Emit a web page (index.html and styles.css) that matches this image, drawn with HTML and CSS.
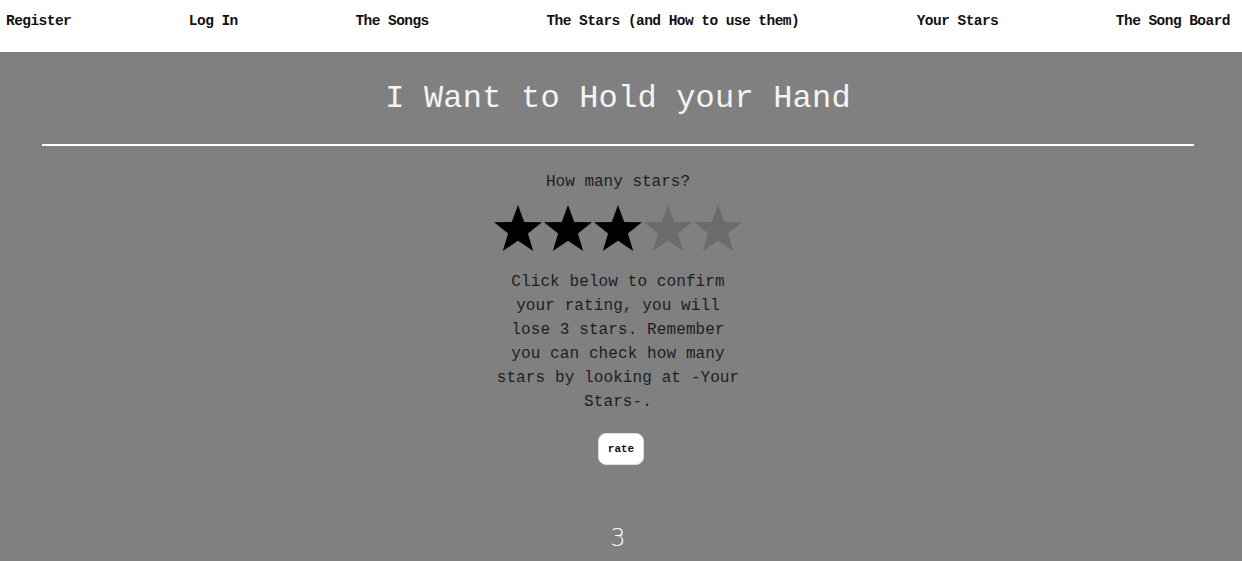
FILE: index.html
```html
<!DOCTYPE html>
<html>
<head>
<meta charset="utf-8">
<link rel="stylesheet" href="styles.css">
</head>
<body>
<nav class="nav">
  <a href="#">Register</a>
  <a href="#">Log In</a>
  <a href="#">The Songs</a>
  <a href="#">The Stars (and How to use them)</a>
  <a href="#">Your Stars</a>
  <a href="#">The Song Board</a>
</nav>
<main class="main">
  <h1 class="title">I Want to Hold your Hand</h1>
  <hr class="rule">
  <section class="rating">
    <p class="ask">How many stars?</p>
    <div class="stars">
      <svg class="star on" viewBox="0 0 50 50"><polygon points="25,1 31.2,18 49,18.3 34.9,29.5 40.2,47 25,36.7 9.8,47 15.1,29.5 1,18.3 18.8,18"/></svg>
      <svg class="star on" viewBox="0 0 50 50"><polygon points="25,1 31.2,18 49,18.3 34.9,29.5 40.2,47 25,36.7 9.8,47 15.1,29.5 1,18.3 18.8,18"/></svg>
      <svg class="star on" viewBox="0 0 50 50"><polygon points="25,1 31.2,18 49,18.3 34.9,29.5 40.2,47 25,36.7 9.8,47 15.1,29.5 1,18.3 18.8,18"/></svg>
      <svg class="star off" viewBox="0 0 50 50"><polygon points="25,1 31.2,18 49,18.3 34.9,29.5 40.2,47 25,36.7 9.8,47 15.1,29.5 1,18.3 18.8,18"/></svg>
      <svg class="star off" viewBox="0 0 50 50"><polygon points="25,1 31.2,18 49,18.3 34.9,29.5 40.2,47 25,36.7 9.8,47 15.1,29.5 1,18.3 18.8,18"/></svg>
    </div>
    <p class="note">Click below to confirm your rating, you will lose 3 stars. Remember you can check how many stars by looking at -Your Stars-.</p>
    <button class="rate">rate</button>
    <div class="count">3</div>
  </section>
</main>
</body>
</html>
```
FILE: styles.css
```css
* { box-sizing: border-box; }
html, body { margin: 0; padding: 0; }
body {
  background: #808080;
  font-family: "Liberation Mono", "DejaVu Sans Mono", monospace;
  overflow: hidden;
}
.nav {
  background: #fff;
  height: 52px;
  display: flex;
  justify-content: space-between;
  align-items: flex-start;
  padding: 11px 12px 0 6px;
}
.nav a {
  color: #111;
  text-decoration: none;
  font-family: "Liberation Mono", monospace;
  font-weight: bold;
  font-size: 14.5px;
  letter-spacing: -0.55px;
  line-height: 20px;
}
.main {
  margin: 0 48px 0 42px;
  display: flex;
  flex-direction: column;
  align-items: center;
}
.title {
  margin: 29px 0 0;
  font-size: 32px;
  font-weight: normal;
  color: #f4f4f4;
  line-height: 36px;
  letter-spacing: 0.2px;
}
.rule {
  align-self: stretch;
  border: 0;
  border-top: 2px solid #fff;
  margin: 27px 0 0;
}
.rating {
  display: flex;
  flex-direction: column;
  align-items: center;
  width: 250px;
}
.ask {
  margin: 26px 0 0;
  font-size: 16px;
  line-height: 20px;
  color: #1e1e1e;
}
.stars {
  display: flex;
  margin-top: 12px;
}
.star { width: 50px; height: 50px; display: block; }
.star.on { fill: #000; }
.star.off { fill: #6b6b6b; }
.note {
  margin: 16px 0 0;
  font-size: 16px;
  line-height: 24px;
  color: #1e1e1e;
  text-align: center;
  letter-spacing: 0.1px;
}
.rate {
  margin: 19px 0 0 6px;
  width: 46px;
  height: 32px;
  background: #fff;
  border: 1px solid #ddd;
  border-radius: 8px;
  font-family: "Liberation Mono", monospace;
  font-size: 11px;
  font-weight: bold;
  color: #111;
  padding: 0;
}
.count {
  margin-top: 58px;
  color: #fff;
  font-family: "DejaVu Sans", sans-serif;
  font-weight: 200;
  font-size: 24px;
  line-height: 30px;
}
```
